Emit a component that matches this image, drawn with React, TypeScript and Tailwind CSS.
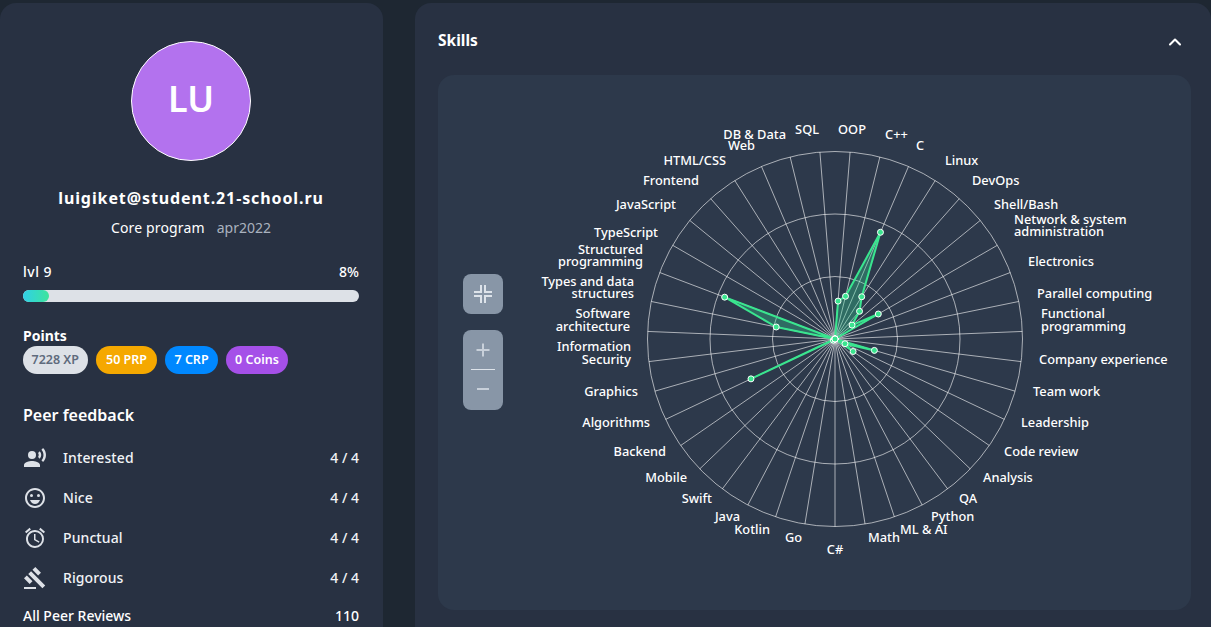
import { MdGavel, MdOutlineAccessAlarm, MdOutlineEmojiEmotions, MdRecordVoiceOver } from "react-icons/md";
import { ChevronUp } from "lucide-react";

const CX = 835;
const CY = 339;
const R = 187.5;
const STEP = 360 / 39;

// radius of each data point in px, clockwise from OOP
const values = [
  38, 44, 116, 50, 37, 22, 50, 0, 0, 0, 0, 41, 11, 22, 0, 0, 0, 0, 0, 0, 0, 0, 0, 0, 0, 2, 93, 0, 0, 0, 60, 118, 0, 0, 0, 0, 0, 0, 0,
];

const polar = (i: number, r: number): [number, number] => {
  const a = ((STEP / 2 + i * STEP) * Math.PI) / 180;
  return [CX + r * Math.sin(a), CY - r * Math.cos(a)];
};

type Lbl = [string, number, number, "start" | "middle" | "end"];

const labels: Lbl[] = [
  ["DB & Data", 786, 134, "end"],
  ["Web", 755, 145, "end"],
  ["SQL", 819, 129, "end"],
  ["OOP", 852, 129, "middle"],
  ["C++", 885, 134, "start"],
  ["C", 916, 145, "start"],
  ["Linux", 945, 160, "start"],
  ["DevOps", 972, 180, "start"],
  ["Shell/Bash", 994, 204, "start"],
  ["Network & system", 1014, 219, "start"],
  ["administration", 1014, 231, "start"],
  ["Electronics", 1028, 261, "start"],
  ["Parallel computing", 1037, 293, "start"],
  ["Functional", 1041, 313, "start"],
  ["programming", 1041, 326, "start"],
  ["Company experience", 1039, 359, "start"],
  ["Team work", 1033, 391, "start"],
  ["Leadership", 1021, 422, "start"],
  ["Code review", 1004, 451, "start"],
  ["Analysis", 983, 477, "start"],
  ["QA", 959, 498, "start"],
  ["Python", 931, 516, "start"],
  ["ML & AI", 900, 529, "start"],
  ["Math", 868, 537, "start"],
  ["C#", 835, 549, "middle"],
  ["Go", 802, 537, "end"],
  ["Kotlin", 770, 529, "end"],
  ["Java", 740, 516, "end"],
  ["Swift", 712, 498, "end"],
  ["Mobile", 687, 477, "end"],
  ["Backend", 666, 451, "end"],
  ["Algorithms", 650, 422, "end"],
  ["Graphics", 638, 391, "end"],
  ["Information", 631, 346, "end"],
  ["Security", 631, 359, "end"],
  ["Software", 630, 313, "end"],
  ["architecture", 630, 326, "end"],
  ["Types and data", 634, 281, "end"],
  ["structures", 634, 293, "end"],
  ["Structured", 643, 249, "end"],
  ["programming", 643, 261, "end"],
  ["TypeScript", 658, 232, "end"],
  ["JavaScript", 676, 204, "end"],
  ["Frontend", 699, 180, "end"],
  ["HTML/CSS", 726, 160, "end"],
];

function Radar() {
  const pts = values.map((v, i) => polar(i, v));
  return (
    <svg width={753} height={535} viewBox="438 75 753 535" className="block">
      {values.map((_, i) => {
        const [x, y] = polar(i, R);
        return <line key={i} x1={CX} y1={CY} x2={x} y2={y} stroke="#ffffff" strokeOpacity={0.6} strokeWidth={1} />;
      })}
      {[62.5, 125, 187.5].map((r) => (
        <circle key={r} cx={CX} cy={CY} r={r} fill="none" stroke="#ffffff" strokeOpacity={0.6} strokeWidth={1} />
      ))}
      <polygon
        points={pts.map((p) => p.join(",")).join(" ")}
        fill="#34e39a"
        fillOpacity={0.3}
        stroke="#3ae58f"
        strokeWidth={2}
        strokeLinejoin="round"
      />
      {pts.map(([x, y], i) => (
        <circle key={i} cx={x} cy={y} r={3} fill="#3ae58f" stroke="#ffffff" strokeWidth={1} />
      ))}
      {labels.map(([t, x, y, anchor]) => (
        <text key={t + y} x={x} y={y + 5} textAnchor={anchor} fill="#ffffff" fontSize={12.8} fontWeight={500}>
          {t}
        </text>
      ))}
    </svg>
  );
}

function FeedbackRow({ icon, label }: { icon: React.ReactNode; label: string }) {
  return (
    <div className="flex h-10 items-center justify-between text-sm font-medium text-[#f1f3f6]">
      <div className="flex items-center gap-4">
        <span className="flex w-6 justify-center text-2xl text-[#dde1e7]">{icon}</span>
        <span className="tracking-[0.1px]">{label}</span>
      </div>
      <span>4 / 4</span>
    </div>
  );
}

function Badge({ text, cls }: { text: string; cls: string }) {
  return <span className={`flex h-7 items-center rounded-full text-[12.5px] font-semibold ${cls}`}>{text}</span>;
}

export default function App() {
  return (
    <div className="flex h-[627px] gap-8 overflow-hidden bg-[#1e2732] pt-[3px] font-['Noto_Sans',sans-serif] text-white">
      <aside className="h-[700px] w-[383px] shrink-0 rounded-2xl bg-[#283142] pl-[23px] pr-6 pt-[38px]">
        <div className="flex flex-col items-center">
          <div className="flex h-[120px] w-[120px] items-center justify-center rounded-full border border-white bg-[#b372ee] pb-1 text-4xl font-semibold">
            LU
          </div>
          <div className="mt-[26px] text-base font-bold leading-[22px] tracking-[0.9px]">luigiket@student.21-school.ru</div>
          <div className="mt-[9px] flex gap-3 text-sm leading-5">
            <span className="tracking-[0.15px]">Core program</span>
            <span className="text-[#aab2bf]">apr2022</span>
          </div>
        </div>
        <div className="mt-[24px] flex justify-between text-sm font-medium leading-5">
          <span className="tracking-[0.5px]">lvl 9</span>
          <span>8%</span>
        </div>
        <div className="mt-[8px] h-3 rounded-full bg-[#dde1e7]">
          <div className="h-3 w-[26px] rounded-full bg-gradient-to-r from-[#32cfe6] to-[#3fe49b]" />
        </div>
        <div className="mt-[24px] text-sm font-bold leading-5">Points</div>
        <div className="flex gap-2">
          <Badge text="7228 XP" cls="bg-[#dde1e7] px-[8.5px] text-[#5f6b7d]" />
          <Badge text="50 PRP" cls="bg-[#f5a800] px-[10.5px] text-white" />
          <Badge text="7 CRP" cls="bg-[#0088ff] px-[9px] text-white" />
          <Badge text="0 Coins" cls="bg-[#a550e8] px-[9.5px] text-white" />
        </div>
        <div className="mt-[30px] text-base font-semibold leading-[22px]">Peer feedback</div>
        <div className="mt-[12px]">
          <FeedbackRow icon={<MdRecordVoiceOver />} label="Interested" />
          <FeedbackRow icon={<MdOutlineEmojiEmotions />} label="Nice" />
          <FeedbackRow icon={<MdOutlineAccessAlarm />} label="Punctual" />
          <FeedbackRow icon={<MdGavel />} label="Rigorous" />
        </div>
        <div className="mt-[8px] flex justify-between text-sm font-medium leading-5">
          <span>All Peer Reviews</span>
          <span>110</span>
        </div>
      </aside>
      <main className="h-[700px] flex-1 rounded-2xl bg-[#283142] pl-[23px] pr-5">
        <div className="flex h-[72px] items-center justify-between">
          <span className="mt-1 text-[15.5px] font-bold">Skills</span>
          <ChevronUp size={20} strokeWidth={2.5} className="mr-[6px] mt-[6px]" />
        </div>
        <div className="relative h-[535px] rounded-2xl bg-[#2d394b]">
          <Radar />
          <div className="absolute left-[25px] top-[199px] flex flex-col gap-4">
            <div className="flex h-10 w-10 items-center justify-center rounded-lg bg-[#8896a7]">
              <svg width={20} height={20} viewBox="0 0 20 20" fill="none" stroke="#dde3ea" strokeWidth={2}>
                <path d="M8 1v7H1M12 1v7h7M8 19v-7H1M12 19v-7h7" />
              </svg>
            </div>
            <div className="flex h-20 w-10 flex-col items-center rounded-lg bg-[#8896a7] text-[#c8d0da]">
              <svg width={16} height={16} viewBox="0 0 16 16" className="mt-[12px]" fill="none" stroke="currentColor" strokeWidth={2}>
                <path d="M1.500 8h13M8 1.500v13" />
              </svg>
              <div className="mt-[11px] h-px w-6 bg-[#dde3ea]" />
              <svg width={16} height={16} viewBox="0 0 16 16" className="mt-[11px]" fill="none" stroke="currentColor" strokeWidth={2}>
                <path d="M2 8h12" />
              </svg>
            </div>
          </div>
        </div>
      </main>
    </div>
  );
}
